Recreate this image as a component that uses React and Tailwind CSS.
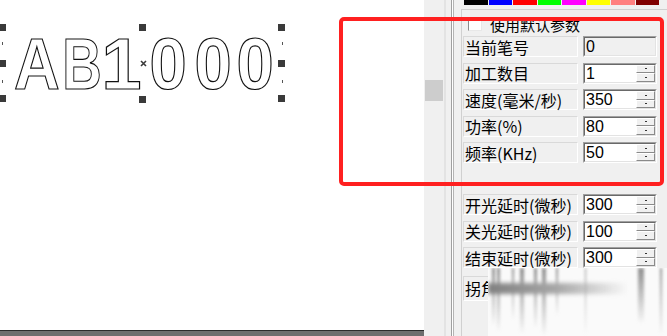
const swatches = ["#000000", "#0000ff", "#ff0000", "#00ff00", "#ff00ff", "#ffff00", "#ff8080", "#800000"];

const cjk = "font-['Noto_Sans_CJK_SC','Noto_Sans',sans-serif]";
const num = "font-['Liberation_Sans',Arial,sans-serif]";

// one outlined glyph of the marking object on the canvas
const glyphs = [
  { ch: "A", left: 13, w: 47, sx: "scale-x-[0.88]" },
  { ch: "B", left: 64, w: 36, sx: "scale-x-[0.76]" },
  { ch: "1", left: 108, w: 27, sx: "scale-x-[1.0]" },
  { ch: "0", left: 151, w: 35, sx: "scale-x-[0.93]" },
  { ch: "0", left: 196, w: 35, sx: "scale-x-[0.93]" },
  { ch: "0", left: 238, w: 35, sx: "scale-x-[0.93]" },
];

const handles = [
  [-1, 24], [139, 24], [278, 24],
  [-1, 60], [278, 60],
  [-1, 95], [139, 96], [278, 95],
];

const Handle = ({ x, y }) => (
  <div className="absolute h-[7px] w-[7px] bg-[#3a3a3a]" style={{ left: x, top: y }} />
);

const Spin = () => (
  <div className="flex w-[19px] flex-col">
    <div className="flex flex-1 items-center justify-center border border-t-white border-l-white border-b-[#8a8a8a] border-r-[#8a8a8a] bg-[#f0f0f0]">
      <span className="h-[1px] w-[2px] bg-[#333]" />
    </div>
    <div className="flex flex-1 items-center justify-center border border-t-white border-l-white border-b-[#8a8a8a] border-r-[#8a8a8a] bg-[#f0f0f0]">
      <span className="h-[1px] w-[2px] bg-[#333]" />
    </div>
  </div>
);

const Label = ({ text, tall }) => (
  <div
    className={`${tall ? "h-[25px]" : "h-[21px]"} flex w-[115px] items-center border border-t-[#d9d9d9] border-l-[#d9d9d9] border-b-white border-r-white bg-[#f0f0f0] pl-[1px] text-[16px] leading-[18px] text-black ${cjk} whitespace-nowrap`}
  >
    {text}
  </div>
);

const Value = ({ value, readOnly }) => (
  <div className="h-[21px] w-[74px] border border-t-[#a0a0a0] border-l-[#a0a0a0] border-b-white border-r-white">
    <div className={`flex h-full w-full border border-t-[#696969] border-l-[#696969] border-b-[#e3e3e3] border-r-[#e3e3e3] ${readOnly ? "bg-[#f0f0f0]" : "bg-white"}`}>
      <div className={`flex flex-1 items-center pl-[1px] text-[16px] leading-[17px] text-black ${num}`}>{value}</div>
      {!readOnly && <Spin />}
    </div>
  </div>
);

const Row = ({ label, value, readOnly }) => (
  <div className="flex h-[26.5px] gap-[5px] pl-[1px]">
    <Label text={label} />
    <Value value={value} readOnly={readOnly} />
  </div>
);

const streaks = [
  [4, 3, 58], [9, 3, 64], [24, 2, 52], [32, 4, 66], [46, 3, 60], [54, 4, 68],
  [68, 2, 48], [97, 1, 68], [150, 6, 56], [172, 2, 68],
];

export default function App() {
  return (
    <div className="relative flex h-[336px] w-[667px] overflow-hidden bg-[#f0f0f0]">
      {/* drawing canvas */}
      <div className="flex w-[424px] flex-col">
        <div className="relative flex-1 bg-white">
          {glyphs.map((g, i) => (
            <div
              key={i}
              className="absolute top-[28px] flex justify-center"
              style={{ left: g.left, width: g.w }}
            >
              <span
                className={`block ${g.sx} text-[72px] font-bold leading-[72px] text-white ${num} [-webkit-text-stroke:1.2px_#111]`}
              >
                {g.ch}
              </span>
            </div>
          ))}
          {handles.map(([x, y], i) => (
            <Handle key={i} x={x} y={y} />
          ))}
          <svg className="absolute left-[140px] top-[60px]" width="7" height="7" viewBox="0 0 7 7">
            <path d="M1 1 L6 6 M6 1 L1 6" stroke="#3a3a3a" strokeWidth="1.6" />
          </svg>
          <div className="absolute left-[2px] top-[42px] h-[3px] w-[1px] bg-[#555]" />
          <div className="absolute left-[2px] top-[80px] h-[3px] w-[1px] bg-[#555]" />
          <div className="absolute left-[282px] top-[42px] h-[3px] w-[1px] bg-[#555]" />
          <div className="absolute left-[282px] top-[80px] h-[3px] w-[1px] bg-[#555]" />
        </div>
        <div className="h-[6px] border-t border-[#2c2c2c] bg-[#6e6e6e]" />
      </div>

      {/* vertical scrollbar */}
      <div className="w-[20px] bg-[#f0f0f0] pt-[80px]">
        <div className="ml-[1px] h-[21px] w-[18px] bg-[#cdcdcd]" />
      </div>

      {/* splitter */}
      <div className="flex w-[17px]">
        <div className="w-[2px] bg-[#e3e3e3]" />
        <div className="w-[5px]" />
        <div className="w-[1px] bg-[#a0a0a0]" />
        <div className="w-[1px] bg-white" />
        <div className="w-[1px] bg-[#b4b4b4]" />
      </div>

      {/* parameter panel */}
      <div className="flex w-[206px] flex-col">
        <div className="ml-[3px] flex h-[5px] gap-[1px]">
          {swatches.map((c) => (
            <div key={c} className="h-full w-[23.5px]" style={{ backgroundColor: c }} />
          ))}
        </div>

        <div className="mt-[4px] h-[178px] border-t border-l border-[#d0d0d0] pr-[6px]">
          <div className="flex h-[26px] items-start pt-[7px]">
            <div className="ml-[6px] h-[14px] w-[14px] border border-t-[#8a8a8a] border-l-[#8a8a8a] border-b-[#e8e8e8] border-r-[#e8e8e8] bg-white" />
            <span className={`ml-[8px] text-[15px] leading-[16px] text-black ${cjk}`}>使用默认参数</span>
          </div>
          <Row label="当前笔号" value="0" readOnly />
          <Row label="加工数目" value="1" />
          <Row label="速度(毫米/秒)" value="350" />
          <Row label="功率(%)" value="80" />
          <Row label="频率(KHz)" value="50" />
        </div>

        <div className="flex-1 border-l border-[#d0d0d0] pt-[7px]">
          <Row label="开光延时(微秒)" value="300" />
          <Row label="关光延时(微秒)" value="100" />
          <Row label="结束延时(微秒)" value="300" />
          <div className="mt-[2px] flex pl-[1px]">
            <Label text="拐角延时(微秒)" tall />
          </div>
        </div>
      </div>

      {/* blurred watermark region */}
      <div className="absolute left-[488px] top-[268px] right-0 bottom-0 overflow-hidden bg-[#fafafa]">
        {streaks.map(([x, w, h], i) => (
          <div
            key={i}
            className="absolute top-0 bg-linear-to-b from-[#8f8f8f] to-transparent blur-[1.5px]"
            style={{ left: x, width: w, height: h }}
          />
        ))}
        <div className="absolute left-0 top-[15px] h-[11px] w-[140px] bg-linear-to-r from-[#808080] via-[#a8a8a8] to-transparent blur-[2px]" />
      </div>

      {/* red annotation frame */}
      <div className="pointer-events-none absolute left-[339px] top-[17px] h-[169px] w-[325px] rounded-[5px] border-4 border-[#ff2020]" />
    </div>
  );
}
